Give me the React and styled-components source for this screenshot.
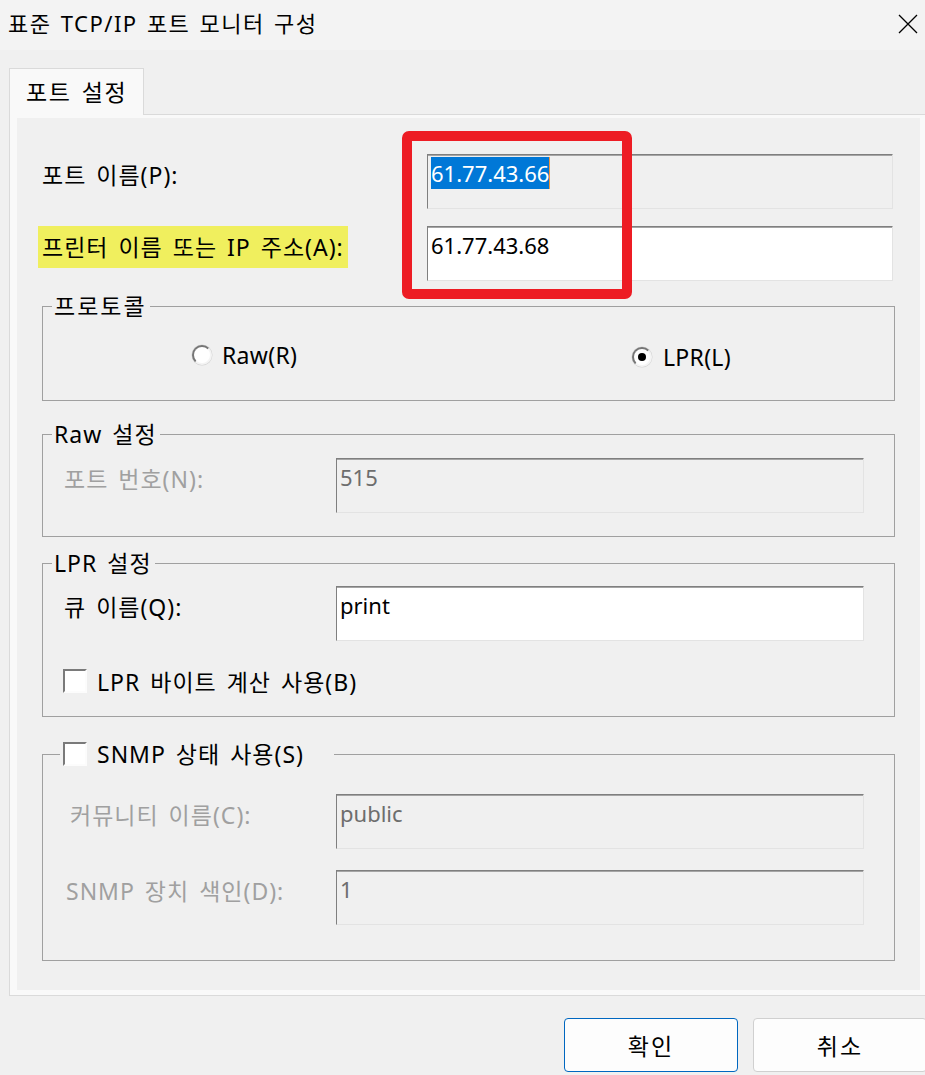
import React from "react";
import styled, { createGlobalStyle } from "styled-components";

const FONT = `"Noto Sans", "Noto Sans CJK KR", sans-serif`;

const GlobalStyle = createGlobalStyle`
  html, body { margin: 0; padding: 0; background: #f0f0f0; }
  body { font-family: ${FONT}; }
`;

const Window = styled.div`
  width: 925px;
  height: 1075px;
  overflow: hidden;
  background: #f0f0f0;
  display: flex;
  flex-direction: column;
  font-family: ${FONT};
  font-size: 23px;
  color: #000;
`;

const TitleBar = styled.div`
  flex: none;
  height: 50px;
  background: #f3f3f3;
  display: flex;
  align-items: center;
  justify-content: space-between;
  padding: 0 6px 0 8px;
`;

const Title = styled.div`
  font-size: 22px;
  line-height: 30px;
  letter-spacing: 1.5px;
  word-spacing: 2px;
  margin-top: -4px;
`;

const Close = styled.div`
  width: 22px;
  height: 22px;
  display: flex;
  align-items: center;
  justify-content: center;
  margin-top: -2px;
`;

const Body = styled.div`
  flex: none;
  padding: 18px 0 0 9px;
`;

const TabStrip = styled.div`
  display: flex;
  height: 46px;
  position: relative;
  z-index: 1;
`;

const Tab = styled.div`
  width: 135px;
  height: 47px;
  box-sizing: border-box;
  border: 1px solid #dadada;
  border-bottom: none;
  background: #f9f9f9;
  padding-left: 16px;
  line-height: 46px;
  letter-spacing: 1.5px;
  word-spacing: 3px;
`;

const Panel = styled.div`
  margin-right: -3px;
  border: 1px solid #dadada;
  background: #f9f9f9;
  padding: 3px 7px 5px 7px;
`;

const PanelContent = styled.div`
  position: relative;
  height: 872px;
  box-sizing: border-box;
  background: #f0f0f0;
  padding: 36px 25px 0 25px;
  display: flex;
  flex-direction: column;
`;

const TopForm = styled.div`
  display: grid;
  grid-template-columns: 389px 466px;
  row-gap: 17px;
  margin: 0 0 0 -4px;
`;

const FormGrid = styled.div`
  display: grid;
  grid-template-columns: 276px 528px;
  row-gap: ${(p) => p.$gap || 0}px;
`;

const Label = styled.div`
  justify-self: start;
  align-self: start;
  padding: 1px 4px 1px ${(p) => 4 + (p.$indent || 0)}px;
  line-height: 40px;
  letter-spacing: 1px;
  word-spacing: 3px;
  white-space: nowrap;
  color: ${(p) => (p.$disabled ? "#a0a0a0" : "#000")};
  background: ${(p) => (p.$highlight ? "#f0ef5e" : "transparent")};
`;

const Field = styled.div`
  height: 55px;
  box-sizing: border-box;
  border: 1px solid;
  border-color: #7f7f7f #e3e3e3 #e3e3e3 #7f7f7f;
  box-shadow: inset 0 1px 0 #a5a5a5;
  background: ${(p) => (p.$disabled ? "#f0f0f0" : "#ffffff")};
  color: ${(p) => (p.$dim ? "#6d6d6d" : "#000")};
  padding: 2px 0 0 3px;
  font-size: 22px;
  line-height: 32px;
  white-space: nowrap;
`;

const Selected = styled.span`
  display: inline-block;
  line-height: 32px;
  background: #0078d7;
  color: #fff;
  box-shadow: 1px 0 0 #f3953c;
`;

const Annotation = styled.div`
  position: absolute;
  left: 385px;
  top: 13px;
  width: 230px;
  height: 168px;
  box-sizing: border-box;
  border: 10px solid #ed1c24;
  border-radius: 7px;
  pointer-events: none;
`;

const Group = styled.fieldset`
  margin: ${(p) => p.$mt}px 0 0 0;
  padding: 0;
  border: 1px solid #a0a0a0;
  min-width: 0;
  width: 853px;
  box-sizing: border-box;
`;

const Legend = styled.legend`
  margin-left: ${(p) => (p.$check ? 17 : 9)}px;
  padding: ${(p) => (p.$check ? "0 30px 0 3px" : "0 3px 0 2px")};
  height: 32px;
  line-height: 32px;
  letter-spacing: ${(p) => (p.$wide ? 2 : 1)}px;
  word-spacing: 3px;
`;

const LegendInner = styled.div`
  display: flex;
  align-items: center;
  gap: 10px;
  height: 32px;
`;

const GroupBody = styled.div`
  padding: ${(p) => p.$pad};
`;

const RadioRow = styled.div`
  display: grid;
  grid-template-columns: 440px auto;
  padding-left: 149px;
  height: 32px;
`;

const Option = styled.label`
  display: flex;
  align-items: center;
  gap: ${(p) => p.$gap || 10}px;
  line-height: 32px;
  letter-spacing: 0.3px;
  margin-top: ${(p) => p.$offset || 0}px;
`;

const Radio = styled.span`
  flex: none;
  width: 20px;
  height: 20px;
  box-sizing: border-box;
  border-radius: 50%;
  border: 2.5px solid;
  border-color: #767676 #f4f4f4 #f4f4f4 #767676;
  box-shadow: 0 0 0 0.5px #d4d4d4;
  background: #fff;
  display: flex;
  align-items: center;
  justify-content: center;

  &::after {
    content: "";
    display: ${(p) => (p.$checked ? "block" : "none")};
    width: 8px;
    height: 8px;
    border-radius: 50%;
    background: #000;
  }
`;

const CheckRow = styled.label`
  display: flex;
  align-items: center;
  gap: 10px;
  height: 32px;
  margin: ${(p) => p.$mt || 0}px 0 0 3px;
  letter-spacing: 1px;
  word-spacing: 3px;
`;

const Check = styled.span`
  flex: none;
  width: 24px;
  height: 24px;
  box-sizing: border-box;
  border: 2px solid;
  border-color: #7a7a7a #fcfcfc #fcfcfc #7a7a7a;
  background: #fff;
`;

const Footer = styled.div`
  display: flex;
  justify-content: flex-end;
  gap: 15px;
  padding-top: 22px;
  margin-right: -2px;
`;

const Button = styled.button`
  width: 174px;
  height: 54px;
  box-sizing: border-box;
  border: 1px solid ${(p) => (p.$primary ? "#0067c0" : "#d0d0d0")};
  border-radius: 4px;
  background: #fdfdfd;
  font-family: ${FONT};
  font-size: 23px;
  letter-spacing: 2px;
  color: #000;
  padding: 0;
`;

export default function App() {
  return (
    <>
      <GlobalStyle />
      <Window>
        <TitleBar>
          <Title>표준 TCP/IP 포트 모니터 구성</Title>
          <Close>
            <svg width="20" height="20" viewBox="0 0 20 20">
              <path d="M1 1 L19 19 M19 1 L1 19" stroke="#000" strokeWidth="1.3" fill="none" />
            </svg>
          </Close>
        </TitleBar>
        <Body>
          <TabStrip>
            <Tab>포트 설정</Tab>
          </TabStrip>
          <Panel>
            <PanelContent>
              <TopForm>
                <Label>포트 이름(P):</Label>
                <Field $disabled>
                  <Selected>61.77.43.66</Selected>
                </Field>
                <Label $highlight>프린터 이름 또는 IP 주소(A):</Label>
                <Field>61.77.43.68</Field>
              </TopForm>
              <Annotation />

              <Group $mt={9}>
                <Legend $wide>프로토콜</Legend>
                <GroupBody $pad="17px 0 29px 0">
                  <RadioRow>
                    <Option $offset={-2}>
                      <Radio />
                      Raw(R)
                    </Option>
                    <Option $gap={11} $offset={2}>
                      <Radio $checked />
                      LPR(L)
                    </Option>
                  </RadioRow>
                </GroupBody>
              </Group>

              <Group $mt={17}>
                <Legend>Raw 설정</Legend>
                <GroupBody $pad="8px 0 23px 17px">
                  <FormGrid>
                    <Label $disabled>포트 번호(N):</Label>
                    <Field $disabled $dim>515</Field>
                  </FormGrid>
                </GroupBody>
              </Group>

              <Group $mt={10}>
                <Legend>LPR 설정</Legend>
                <GroupBody $pad="7px 0 19px 17px">
                  <FormGrid>
                    <Label>큐 이름(Q):</Label>
                    <Field>print</Field>
                  </FormGrid>
                  <CheckRow $mt={24}>
                    <Check />
                    LPR 바이트 계산 사용(B)
                  </CheckRow>
                </GroupBody>
              </Group>

              <Group $mt={21}>
                <Legend $check>
                  <LegendInner>
                    <Check />
                    SNMP 상태 사용(S)
                  </LegendInner>
                </Legend>
                <GroupBody $pad="24px 0 35px 17px">
                  <FormGrid $gap={21}>
                    <Label $disabled $indent={6}>커뮤니티 이름(C):</Label>
                    <Field $disabled $dim>public</Field>
                    <Label $disabled $indent={2}>SNMP 장치 색인(D):</Label>
                    <Field $disabled $dim>1</Field>
                  </FormGrid>
                </GroupBody>
              </Group>
            </PanelContent>
          </Panel>
        </Body>
        <Footer>
          <Button $primary>확인</Button>
          <Button>취소</Button>
        </Footer>
      </Window>
    </>
  );
}
